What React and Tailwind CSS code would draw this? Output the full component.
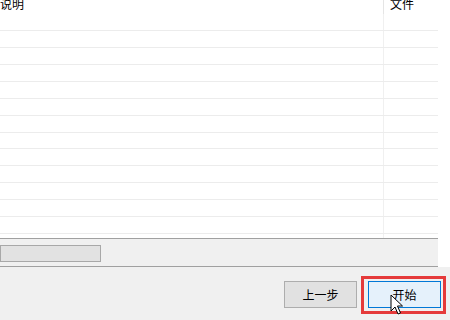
import React from "react";

const FONT = { fontFamily: '"Noto Sans CJK SC", "Noto Sans", sans-serif' };

export default function App() {
  const rows = Array.from({ length: 13 });
  return (
    <div
      className="relative w-[450px] h-[320px] overflow-hidden bg-[#f0f0f0] flex flex-col text-black"
      style={FONT}
    >
      <div className="h-[267px] flex bg-white">
        <div className="w-[438px] flex flex-col">
          <div className="h-[14px] flex overflow-hidden">
            <div className="w-[384px] border-r border-[#e5e5e5] text-[12px] leading-[12px] -mt-[2px]">
              说明
            </div>
            <div className="flex-1 pl-[6px] text-[12px] leading-[12px] -mt-[2px]">文件</div>
          </div>
          {rows.map((_, i) => (
            <div key={i} className="h-[17px] flex border-b border-[#ececec]">
              <div className="w-[384px] border-r border-[#f0f0f0]" />
              <div className="flex-1" />
            </div>
          ))}
          <div className="h-[4px] flex">
            <div className="w-[384px] border-r border-[#f0f0f0]" />
          </div>
          <div className="h-[29px] border-t border-b border-[#a0a0a0] bg-[#f0f0f0] pt-[6px]">
            <div className="w-[101px] h-[17px] bg-[#e2e2e2] border border-[#a8a8a8]" />
          </div>
        </div>
        <div className="flex-1 bg-white" />
      </div>
      <div className="flex-1 flex justify-end items-start pt-[14px] pr-[9px] gap-[11px]">
        <div className="w-[73px] h-[27px] bg-[#e1e1e1] border border-[#adadad] flex items-center justify-center text-[12px]">
          上一步
        </div>
        <div className="w-[73px] h-[27px] bg-[#e5f1fb] border border-[#0078d7] flex items-center justify-center text-[12px]">
          开始
        </div>
      </div>
      <div className="absolute left-[361px] top-[276px] w-[85px] h-[38px] border-[3px] border-[#e53a3a]" />
      <svg
        className="absolute left-[390px] top-[294px]"
        width="14"
        height="22"
        viewBox="0 0 14 22"
      >
        <path
          d="M1 1 L1 17 L5 13 L8 20 L10.5 19 L7.5 12 L12.5 12 Z"
          fill="white"
          stroke="black"
          strokeWidth="1"
          strokeLinejoin="round"
        />
      </svg>
    </div>
  );
}
